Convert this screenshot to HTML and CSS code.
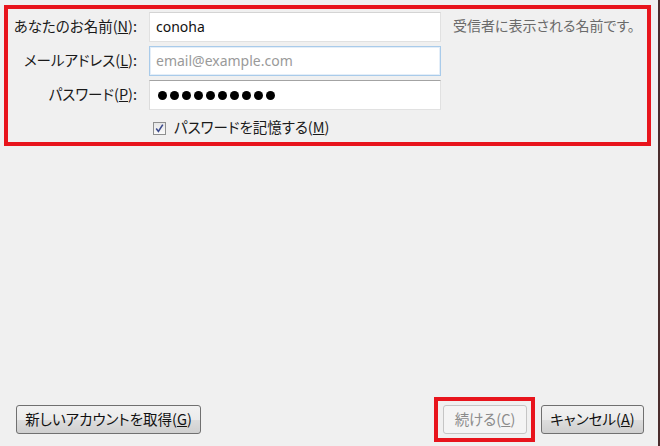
FILE: index.html
```html
<!DOCTYPE html>
<html lang="ja">
<head>
<meta charset="utf-8">
<link rel="stylesheet" href="styles.css">
</head>
<body>
<div class="window">
  <section class="form-box">
    <div class="form-grid">
      <label class="label">あなたのお名前(<u>N</u>):</label>
      <div class="field field-name"><span class="value">conoha</span></div>
      <div class="hint">受信者に表示される名前です。</div>

      <label class="label">メールアドレス(<u>L</u>):</label>
      <div class="field field-email"><span class="placeholder">email@example.com</span></div>
      <div></div>

      <label class="label">パスワード(<u>P</u>):</label>
      <div class="field field-pass">
        <span class="dots"><i></i><i></i><i></i><i></i><i></i><i></i><i></i><i></i><i></i><i></i></span>
      </div>
      <div></div>

      <div></div>
      <div class="check-row">
        <span class="checkbox"><svg width="11" height="11" viewBox="0 0 11 11"><path d="M2.2 5.6 L4.4 8.4 L8.8 1.6" fill="none" stroke="#3c4b8c" stroke-width="1.6"/></svg></span>
        <span class="check-label">パスワードを記憶する(<u>M</u>)</span>
      </div>
      <div></div>
    </div>
  </section>

  <div class="spacer"></div>

  <footer class="footer">
    <button class="btn btn-new">新しいアカウントを取得(<u>G</u>)</button>
    <div class="footer-right">
      <div class="highlight">
        <button class="btn btn-disabled">続ける(<u>C</u>)</button>
      </div>
      <button class="btn btn-cancel">キャンセル(<u>A</u>)</button>
    </div>
  </footer>
</div>
</body>
</html>
```

FILE: styles.css
```css
html, body {
  margin: 0;
  padding: 0;
}
body {
  background: #f0f0f0;
  font-family: "Noto Sans CJK JP", "Noto Sans", sans-serif;
  font-feature-settings: "palt";
  font-size: 14px;
  color: #1a1a1a;
}
.window {
  width: 658px;
  height: 446px;
  border-right: 2px solid #4a2c2c;
  display: flex;
  flex-direction: column;
}
.form-box {
  margin: 5px 0 0 4px;
  width: 639px;
  height: 133px;
  border: 4px solid #e8141c;
}
.form-grid {
  display: grid;
  grid-template-columns: 130px 292px 1fr;
  column-gap: 11px;
  row-gap: 4px;
  padding-top: 3px;
  align-items: center;
}
.label {
  text-align: right;
  line-height: 20px;
  white-space: nowrap;
  padding-right: 1px;
  margin-top: -3px;
  font-size: 14.5px;
}
.field {
  box-sizing: border-box;
  height: 30px;
  background: #fff;
  border: 1px solid #e1e1e1;
  border-top-color: #d4d4d4;
  display: flex;
  align-items: center;
  padding-left: 6px;
  font-family: "Noto Sans", sans-serif;
  font-feature-settings: normal;
  font-size: 14px;
}
.field-email {
  border-color: #a9cbea;
  box-shadow: inset 0 0 0 1px #e4eef8;
}
.field-pass {
  border-top-color: #a3a3a3;
  border-left-color: #dcdcdc;
  padding-left: 8px;
}
.value {
  color: #111;
  margin-top: -2px;
}
.placeholder {
  color: #9a9a9a;
  margin-top: -2px;
}
.hint {
  color: #6a6a6a;
  font-size: 14px;
  line-height: 20px;
  margin-left: 1px;
  margin-top: -4px;
  white-space: nowrap;
}
.dots {
  display: flex;
  gap: 3px;
}
.dots i {
  display: block;
  width: 9px;
  height: 9px;
  border-radius: 50%;
  background: #000;
}
.check-row {
  grid-column: 2 / 4;
  display: flex;
  align-items: center;
  height: 26px;
  margin-top: 1px;
  margin-left: 4px;
}
.checkbox {
  box-sizing: border-box;
  width: 13px;
  height: 13px;
  border: 1px solid #8e8f8f;
  background: linear-gradient(#e6e6e6, #fafafa);
  display: flex;
  align-items: center;
  justify-content: center;
  margin-right: 8px;
}
.checkbox svg {
  display: block;
}
.check-label {
  line-height: 20px;
  margin-top: -2px;
  font-size: 14.5px;
}
.spacer {
  flex: 1;
}
.footer {
  display: flex;
  justify-content: space-between;
  align-items: center;
  padding: 0 14px 4px 16px;
}
.footer-right {
  display: flex;
  align-items: center;
  gap: 6px;
}
.highlight {
  border: 4px solid #e8141c;
  padding: 4px 4px 4px 5px;
  display: flex;
}
.btn {
  box-sizing: border-box;
  height: 29px;
  padding: 0 4px 2px;
  font-family: "Noto Sans CJK JP", "Noto Sans", sans-serif;
  font-feature-settings: "palt";
  font-size: 14.5px;
  color: #111;
  border: 1px solid #707070;
  border-radius: 3px;
  background: linear-gradient(#f2f2f2 0%, #ebebeb 50%, #dddddd 51%, #cfcfcf 100%);
  white-space: nowrap;
}
.btn-new {
  width: 185px;
}
.btn-disabled {
  width: 84px;
  color: #8b8b8b;
  border-color: #c5c5c5;
  background: #f4f4f4;
}
.btn-cancel {
  width: 103px;
}
```
